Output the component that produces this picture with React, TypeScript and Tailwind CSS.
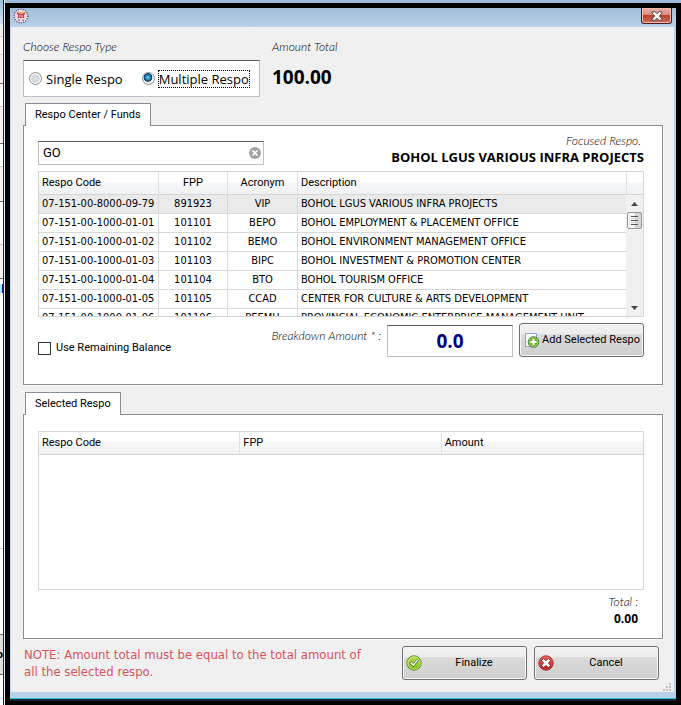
import { useState, type ReactNode } from "react";

type Respo = { code: string; fpp: string; acronym: string; description: string };

const RESPOS: Respo[] = [
  { code: "07-151-00-8000-09-79", fpp: "891923", acronym: "VIP", description: "BOHOL LGUS VARIOUS INFRA PROJECTS" },
  { code: "07-151-00-1000-01-01", fpp: "101101", acronym: "BEPO", description: "BOHOL EMPLOYMENT & PLACEMENT OFFICE" },
  { code: "07-151-00-1000-01-02", fpp: "101102", acronym: "BEMO", description: "BOHOL ENVIRONMENT MANAGEMENT OFFICE" },
  { code: "07-151-00-1000-01-03", fpp: "101103", acronym: "BIPC", description: "BOHOL INVESTMENT & PROMOTION CENTER" },
  { code: "07-151-00-1000-01-04", fpp: "101104", acronym: "BTO", description: "BOHOL TOURISM OFFICE" },
  { code: "07-151-00-1000-01-05", fpp: "101105", acronym: "CCAD", description: "CENTER FOR CULTURE & ARTS DEVELOPMENT" },
  { code: "07-151-00-1000-01-06", fpp: "101106", acronym: "PEEMU", description: "PROVINCIAL ECONOMIC ENTERPRISE MANAGEMENT UNIT" },
];

const HEADER = "h-[23px] border-b border-[#d5d5d5] bg-[linear-gradient(#ffffff_0%,#ffffff_45%,#f7f8fa_46%,#f0f1f3_100%)]";
const BUTTON =
  "relative flex h-[34px] w-[125px] items-center rounded-[3px] border border-[#707070] bg-[linear-gradient(#f2f2f2_0%,#ebebeb_32%,#dadada_33%,#cfcfcf_100%)] text-[11px] text-black shadow-[inset_0_0_0_1px_#f6f6f6]";
const FIELD = "border border-[#c0c0c4] border-t-[#5a5a5a] bg-white";
const HEADING = "font-['Open_Sans','Noto_Sans',sans-serif]";
const CONDENSED = "font-['DejaVu_Sans_Condensed','Roboto',sans-serif]";
const CAPTION = "font-['Lato','Open_Sans',sans-serif] text-[12px] leading-[16px] font-light italic";

function TabPanel({ title, children }: { title: string; children: ReactNode }) {
  return (
    <section>
      <div role="tablist" className="flex pl-[2px]">
        <button
          role="tab"
          aria-selected="true"
          className="relative z-10 -mb-px h-[23px] border border-b-0 border-[#898c95] bg-white px-[9px] text-[11px]"
        >
          {title}
        </button>
      </div>
      <div className="border border-[#898c95] bg-white pr-[18px] pl-[14px] shadow-[1px_1px_0_#fafafa]">{children}</div>
    </section>
  );
}

function Radio({ label, checked, onChange }: { label: string; checked: boolean; onChange: () => void }) {
  return (
    <label className={`${HEADING} flex items-center gap-[3px] text-[13px] leading-[16px]`}>
      <input
        type="radio"
        name="respo-type"
        checked={checked}
        onChange={onChange}
        className="size-[13px] appearance-none rounded-full border border-[#8e8f8f] bg-[radial-gradient(#e0e2e4_0%,#cfd3d6_45%,#f6f6f6_60%)] outline-none checked:bg-[radial-gradient(circle_at_45%_40%,#7fd0f2_0%,#1f7fb4_28%,#0c3c60_45%,#f2f2f2_52%)]"
      />
      <span className={checked ? "border border-dotted border-black" : "border border-transparent"}>{label}</span>
    </label>
  );
}

function AppIcon() {
  return (
    <svg width="16" height="16" viewBox="0 0 16 16" aria-hidden="true">
      <circle cx="8" cy="8" r="6.800" fill="#f3eef4" stroke="#6d5c78" strokeWidth="1.600" strokeDasharray="1.200 1.200" />
      <circle cx="8" cy="8" r="5" fill="#fbf3f5" stroke="#b98aa4" strokeWidth=".8" strokeDasharray="1 1" />
      <path d="M3.500 4.500h2L7 6h2l1.500-1.500h2L11 7.500l.5 3L9 9.500 8 11 7 9.500l-2.500 1 .5-3z" fill="#d03c48" />
      <path d="M6 4h4v2H6z" fill="#edb35c" />
      <path d="M6 7.500h1.500v1H6zM8.500 7.500H10v1H8.500z" fill="#fff" />
      <path d="M5 12h2M9 12h2" stroke="#5a4c88" />
    </svg>
  );
}

function CloseIcon() {
  return (
    <svg width="12" height="10" viewBox="0 0 12 10" aria-hidden="true">
      <path
        d="M1 .8h3.2L6 2.7 7.8.8H11v1.1L8.4 5 11 8.1v1.1H7.8L6 7.3 4.2 9.2H1V8.1L3.6 5 1 1.9z"
        fill="#f6f6f6"
        stroke="#4c4f5c"
        strokeWidth="1"
      />
    </svg>
  );
}

function AddIcon() {
  return (
    <svg width="16" height="16" viewBox="0 0 16 16" aria-hidden="true">
      <path d="M1.500 1.500h11v13h-11z" fill="#f8fafe" stroke="#8da3d4" />
      <circle cx="9.500" cy="10" r="5.300" fill="#6fae35" stroke="#4c7c2c" />
      <circle cx="9.500" cy="10" r="4.300" fill="none" stroke="#b4dc82" strokeWidth=".8" />
      <path d="M9.500 7v6M6.500 10h6" stroke="#fff" strokeWidth="2" />
    </svg>
  );
}

function CheckIcon() {
  return (
    <svg width="16" height="16" viewBox="0 0 16 16" aria-hidden="true">
      <defs>
        <linearGradient id="green" x2="0" y2="1">
          <stop stopColor="#b9dc5c" />
          <stop offset="1" stopColor="#7fb81e" />
        </linearGradient>
      </defs>
      <circle cx="8" cy="8" r="7.200" fill="url(#green)" stroke="#5f8f1e" />
      <circle cx="8" cy="8" r="6.200" fill="none" stroke="#d0ea8a" strokeWidth=".7" />
      <path d="m3.800 8.300 1.500-1.500 1.900 1.700 3.600-4.200 1.600 1.300-5 6z" fill="#fff" stroke="#4e7a1c" strokeWidth=".9" />
    </svg>
  );
}

function CancelIcon() {
  return (
    <svg width="16" height="16" viewBox="0 0 16 16" aria-hidden="true">
      <defs>
        <linearGradient id="red" x2="0" y2="1">
          <stop stopColor="#e8706a" />
          <stop offset="1" stopColor="#c01c1c" />
        </linearGradient>
      </defs>
      <circle cx="8" cy="8" r="7.200" fill="url(#red)" stroke="#b03030" />
      <path
        d="m5.500 3.500 2.500 2 2.500-2 2 2-2 2.500 2 2.500-2 2-2.500-2-2.500 2-2-2 2-2.500-2-2.500z"
        fill="#fff"
        stroke="#8e1616"
        strokeWidth=".8"
      />
    </svg>
  );
}

function BackdropLeft() {
  return (
    <div aria-hidden="true" className="flex w-[5px] shrink-0 border-r border-[#e4eef8]">
      <div className="flex w-[3px] flex-col overflow-hidden bg-white text-[11px] leading-[14px] font-bold">
        <div className="h-[24px] bg-[linear-gradient(#9dbddc,#d5e3f1)]" />
        <div className="h-[13px] border-b border-[#d4d4d4] bg-[#f0f0f0]" />
        <div className="h-[18px] border-b border-[#d4d4d4] bg-[#faf9f6]" />
        <div className="h-[29px] border-b border-[#707070] bg-[#f4f2ee]" />
        <div className="h-[23px] border-b border-[#c8c8c8]" />
        <div className="h-[37px] border-b border-[#707070] bg-[#f6f4f0]" />
        <div className="h-[23px] border-b border-[#c8c8c8]" />
        <div className="h-[35px] border-b border-[#707070] bg-[#f6f4f0]" />
        <div className="h-[43px] border-b border-[#c8c8c8]" />
        <div className="h-[34px] border-b border-[#707070] bg-[#f6f4f0]" />
        <div className="h-[5px]" />
        <div className="h-[9px] bg-[linear-gradient(90deg,#8ff0f8_0_66%,#3a0a8c_66%)]" />
        <div className="h-[256px] border-b border-[#c8c8c8]" />
        <div className="h-[86px] border-b border-[#707070]" />
        <div className="flex h-[40px] items-center justify-end border-b border-[#707070] bg-[#dedede]">o</div>
        <div className="grow" />
      </div>
      <div className="w-px bg-[#20262c]" />
    </div>
  );
}

export default function App() {
  const [multiple, setMultiple] = useState(true);
  const [search, setSearch] = useState("GO");
  const [amount, setAmount] = useState("0.0");
  const [useRemaining, setUseRemaining] = useState(false);

  return (
    <div className="flex min-h-screen bg-white font-['Roboto','Noto_Sans',sans-serif] text-[11px] leading-[14px] text-black">
      <BackdropLeft />
      <div className="flex min-w-0 grow flex-col">
        <div className="h-[3px] bg-[#9dbddb]" />
        <div className="flex grow flex-col border-[5px] border-b-[4px] border-black bg-[#f0f0f0]">
          <header className="flex h-[19px] items-start justify-between bg-[linear-gradient(#a3bfda,#bad1ea)] pr-[4px] pl-[3px]">
            <AppIcon />
            <button
              aria-label="Close"
              className="flex h-[16px] w-[31px] items-center justify-center rounded-b-[3px] border border-t-0 border-[#52191e] bg-[linear-gradient(#eab0a6_0%,#dd8a7c_45%,#b83c26_46%,#d0705c_100%)] shadow-[inset_0_0_0_1px_#efb9ae]"
            >
              <CloseIcon />
            </button>
          </header>

          <main className="relative grow border-r-2 border-l border-[#b9d1ea] pt-[12px] pr-[11px] pb-[12px] pl-[12px]">
            <div className="flex gap-[12px]">
              <fieldset className="w-[237px]">
                <legend className={`${CAPTION} h-[21px]`}>Choose Respo Type</legend>
                <div className={`${FIELD} flex h-[37px] items-center gap-[18px] px-[5px]`}>
                  <Radio label="Single Respo" checked={!multiple} onChange={() => setMultiple(false)} />
                  <Radio label="Multiple Respo" checked={multiple} onChange={() => setMultiple(true)} />
                </div>
              </fieldset>
              <div>
                <p className={CAPTION}>Amount Total</p>
                <p className={`${HEADING} pt-[10px] text-[19px] leading-[24px] font-bold`}>100.00</p>
              </div>
            </div>

            <div className="pt-[6px]">
              <TabPanel title="Respo Center / Funds">
                <div className="flex items-end justify-between pt-[7px]">
                  <div className={`${FIELD} mt-[7px] flex h-[24px] w-[226px] items-center pr-[2px] pl-[4px]`}>
                    <input
                      aria-label="Search respo"
                      value={search}
                      onChange={(e) => setSearch(e.target.value)}
                      className="min-w-0 grow text-[13px] outline-none"
                    />
                    <button aria-label="Clear search" onClick={() => setSearch("")}>
                      <svg width="12" height="12" viewBox="0 0 12 12" aria-hidden="true">
                        <circle cx="6" cy="6" r="6" fill="#a2a2a2" />
                        <path d="m3.500 3.500 5 5m0-5-5 5" stroke="#fff" strokeWidth="1.600" />
                      </svg>
                    </button>
                  </div>
                  <div className="text-right">
                    <p className={`${CAPTION} pr-[3px]`}>Focused Respo.</p>
                    <p className={`${HEADING} text-[13px] leading-[16px] font-bold`}>BOHOL LGUS VARIOUS INFRA PROJECTS</p>
                  </div>
                </div>

                <div className="mt-[6px] flex h-[146px] overflow-hidden border border-[#d5d5d5]">
                  <div className="min-w-0 grow overflow-hidden">
                    <table className="w-full table-fixed border-separate border-spacing-0 whitespace-nowrap">
                      <colgroup>
                        <col className="w-[120px]" />
                        <col className="w-[69px]" />
                        <col className="w-[70px]" />
                        <col />
                      </colgroup>
                      <thead>
                        <tr>
                          <th className={`${HEADER} border-r border-r-[#e2e2e2] pl-[3px] text-left font-normal`}>Respo Code</th>
                          <th className={`${HEADER} border-r border-r-[#e2e2e2] text-center font-normal`}>FPP</th>
                          <th className={`${HEADER} border-r border-r-[#e2e2e2] text-center font-normal`}>Acronym</th>
                          <th className={`${HEADER} pl-[3px] text-left font-normal`}>Description</th>
                        </tr>
                      </thead>
                      <tbody className={CONDENSED}>
                        {RESPOS.map((r, i) => (
                          <tr key={r.code} className={i === 0 ? "bg-[#eaeaea]" : "bg-white"}>
                            <td className="h-[19px] border-r border-b border-[#d9d9d9] pl-[3px]">{r.code}</td>
                            <td className="border-r border-b border-[#d9d9d9] text-center">{r.fpp}</td>
                            <td className="border-r border-b border-[#d9d9d9] text-center">{r.acronym}</td>
                            <td className="border-b border-[#d9d9d9] pl-[3px]">{r.description}</td>
                          </tr>
                        ))}
                      </tbody>
                    </table>
                  </div>
                  <div className="flex w-[17px] shrink-0 flex-col">
                    <div className={`${HEADER} shrink-0 border-l border-l-[#e2e2e2]`} />
                    <div className="flex grow flex-col items-center bg-[#f0f0f0]">
                      <button aria-label="Scroll up" className="flex h-[17px] w-full items-center justify-center">
                        <svg width="7" height="4" viewBox="0 0 7 4" aria-hidden="true">
                          <path d="M0 4 3.500 0 7 4z" fill="#454545" />
                        </svg>
                      </button>
                      <div className="flex h-[17px] w-[15px] flex-col items-center justify-center gap-px rounded-[2px] border border-[#979797] bg-[linear-gradient(90deg,#f4f4f4_50%,#d4d4d8_51%)]">
                        <div className="h-px w-[7px] bg-[#555555]" />
                        <div className="h-px w-[7px] bg-[#d8d8d8]" />
                        <div className="h-px w-[7px] bg-[#555555]" />
                        <div className="h-px w-[7px] bg-[#d8d8d8]" />
                        <div className="h-px w-[7px] bg-[#555555]" />
                      </div>
                      <button aria-label="Scroll down" className="mt-auto flex h-[17px] w-full items-center justify-center">
                        <svg width="7" height="4" viewBox="0 0 7 4" aria-hidden="true">
                          <path d="M0 0h7L3.500 4z" fill="#454545" />
                        </svg>
                      </button>
                    </div>
                  </div>
                </div>

                <div className="flex items-start pt-[6px] pb-[27px]">
                  <label className="flex items-center gap-[5px] pt-[18px]">
                    <input
                      type="checkbox"
                      checked={useRemaining}
                      onChange={(e) => setUseRemaining(e.target.checked)}
                      className="size-[13px] appearance-none border border-[#333333] bg-white checked:bg-[#333333]"
                    />
                    Use Remaining Balance
                  </label>
                  <label htmlFor="breakdown" className={`${CAPTION} ml-auto pt-[5px]`}>
                    Breakdown Amount * :
                  </label>
                  <input
                    id="breakdown"
                    value={amount}
                    onChange={(e) => setAmount(e.target.value)}
                    className={`${FIELD} ${HEADING} mt-[2px] ml-[6px] h-[32px] w-[126px] text-center text-[19px] font-bold text-[#000080] outline-none`}
                  />
                  <button className={`${BUTTON} ml-[6px] gap-[2px] pl-[4px] whitespace-nowrap`}>
                    <AddIcon />
                    Add Selected Respo
                  </button>
                </div>
              </TabPanel>
            </div>

            <div className="pt-[7px]">
              <TabPanel title="Selected Respo">
                <div className="pt-[16px]">
                  <div className="h-[159px] border border-[#d5d5d5]">
                    <table className="w-full table-fixed border-separate border-spacing-0">
                      <thead>
                        <tr>
                          <th className={`${HEADER} border-r border-r-[#e2e2e2] pl-[3px] text-left font-normal`}>Respo Code</th>
                          <th className={`${HEADER} border-r border-r-[#e2e2e2] pl-[3px] text-left font-normal`}>FPP</th>
                          <th className={`${HEADER} pl-[3px] text-left font-normal`}>Amount</th>
                        </tr>
                      </thead>
                      <tbody />
                    </table>
                  </div>
                </div>
                <div className="pt-[4px] pr-[6px] pb-[11px] text-right">
                  <p className={CAPTION}>Total :</p>
                  <p className={`${HEADING} text-[12px] leading-[17px] font-bold`}>0.00</p>
                </div>
              </TabPanel>
            </div>

            <footer className="flex items-start gap-[7px] pt-[7px] pr-[4px]">
              <p className={`${CONDENSED} min-w-0 grow pr-[30px] pl-px text-[13px] leading-[17px] text-[#d9535f]`}>
                NOTE: Amount total must be equal to the total amount of all the selected respo.
              </p>
              <button className={`${BUTTON} shrink-0 pl-[3px]`}>
                <CheckIcon />
                <span className="grow text-center">Finalize</span>
              </button>
              <button className={`${BUTTON} shrink-0 pl-[3px]`}>
                <CancelIcon />
                <span className="grow text-center">Cancel</span>
              </button>
            </footer>

            <svg className="absolute right-[2px] bottom-0" width="9" height="9" viewBox="0 0 9 9" aria-hidden="true">
              <path d="M6 0h2v2H6zM3 3h2v2H3zM6 3h2v2H6zM0 6h2v2H0zM3 6h2v2H3zM6 6h2v2H6z" fill="#c0c0c0" />
            </svg>
          </main>

          <div className="h-[9px] border-b-2 border-[#20262c] bg-[#b9d1ea] shadow-[inset_0_-1px_0_#22c4e0]" />
        </div>
      </div>
      <div className="w-px bg-[#3c4650]" />
    </div>
  );
}
